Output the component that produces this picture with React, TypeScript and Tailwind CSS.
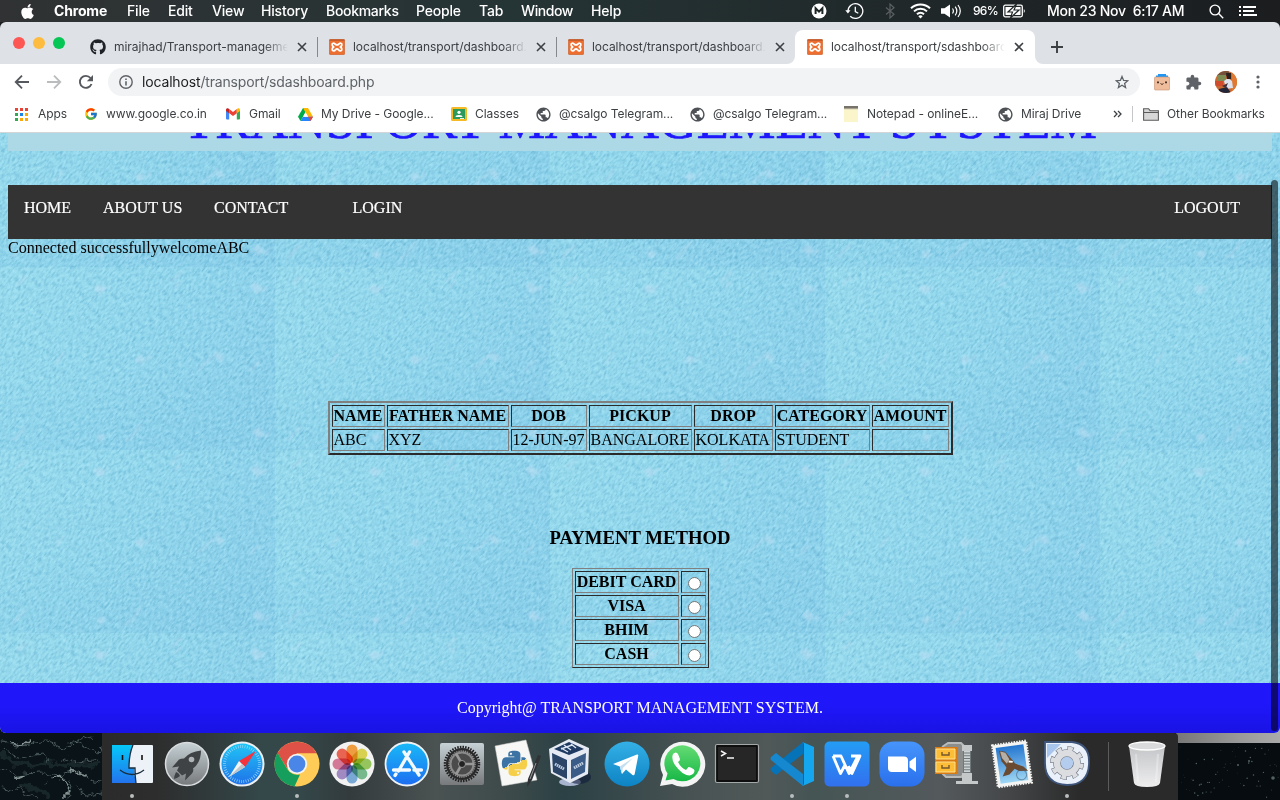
import React from 'react';
import { FaApple, FaGithub, FaPython } from 'react-icons/fa';
import { MdExtension, MdPublic } from 'react-icons/md';
import { FcGoogle } from 'react-icons/fc';

/* ---------- macOS menu bar ---------- */

const menus = [
  { label: 'Chrome', cls: 'w-[73px] font-bold' },
  { label: 'File', cls: 'w-[41px] font-medium' },
  { label: 'Edit', cls: 'w-[44px] font-medium' },
  { label: 'View', cls: 'w-[49px] font-medium' },
  { label: 'History', cls: 'w-[65px] font-medium' },
  { label: 'Bookmarks', cls: 'w-[90px] font-medium tracking-[-0.3px]' },
  { label: 'People', cls: 'w-[63px] font-medium' },
  { label: 'Tab', cls: 'w-[42px] font-medium' },
  { label: 'Window', cls: 'w-[70px] font-medium tracking-[-0.4px]' },
  { label: 'Help', cls: 'w-[60px] font-medium' },
];

function MenuBar() {
  return (
    <header className="flex h-[22px] shrink-0 items-center bg-linear-to-r from-[#303233] via-[#253435] via-40% to-[#1b1d1f] text-[14px] leading-[22px] tracking-[-0.18px] text-white">
      <FaApple className="ml-[19px] mr-[18px] size-[17px]" />
      {menus.map((m) => (
        <span key={m.label} className={`shrink-0 whitespace-nowrap ${m.cls}`}>{m.label}</span>
      ))}
      <svg className="ml-auto mr-[18px] shrink-0" width="16" height="16" viewBox="0 0 16 16">
        <circle cx="8" cy="8" r="7.5" fill="#fff" />
        <path d="M4.6 11V5.2L8 8.6l3.4-3.4V11" fill="none" stroke="#1c2425" strokeWidth="2" />
      </svg>
      <svg className="mr-[21px] shrink-0" width="19" height="18" viewBox="0 0 19 18" fill="none" stroke="#fff" strokeWidth="1.3">
        <path d="M3 9a7.4 7.4 0 1 1 2.2 5.3" />
        <path d="M10.3 4.8v4.8l3 1.6" />
        <path d="M.3 8.3h5.2L2.9 11.6z" fill="#fff" stroke="none" />
      </svg>
      <svg className="mr-[15px] shrink-0" width="10" height="16" viewBox="0 0 10 16" fill="none" stroke="#5b6061" strokeWidth="1.2">
        <path d="M1 4.5 9 11.300 5 15V1l4 3.700L1 11.500" />
      </svg>
      <svg className="mr-[10px] shrink-0" width="21" height="16" viewBox="0 0 21 16" fill="none" stroke="#fff" strokeWidth="2">
        <path d="M1 5.300a13.500 13.500 0 0 1 19 0M4 8.400a9.300 9.300 0 0 1 13 0M7 11.300a5 5 0 0 1 7 0" />
        <path d="m10.500 15.500-2.200-2.300a3.200 3.200 0 0 1 4.400 0z" fill="#fff" stroke="none" />
      </svg>
      <svg className="mr-[11px] shrink-0" width="21" height="16" viewBox="0 0 21 16" fill="none" stroke="#fff" strokeWidth="1.200">
        <path d="M0 5.300h3.500L9 1.500v13L3.500 10.700H0z" fill="#fff" stroke="none" />
        <path d="M11.500 5.500q1.800 2.500 0 5M14.200 3.700q3.200 4.300 0 8.600M17 2q4.600 6 0 12" />
      </svg>
      <span className="w-[30px] shrink-0 text-[12px] font-medium tracking-[-0.7px]">96%</span>
      <svg className="shrink-0" width="23" height="14" viewBox="0 0 23 14">
        <rect x=".7" y="1.200" width="18.600" height="11.600" rx="1.500" fill="none" stroke="#fff" strokeWidth="1.300" />
        <rect x="2.500" y="3" width="15" height="8" fill="#fff" />
        <path d="M20.800 5q2 2 0 4z" fill="#fff" />
        <path d="M13.500 0 5 8h4.500L7.500 14 16 6h-5z" fill="#fff" stroke="#1e2526" strokeWidth="1.200" />
      </svg>
      <span className="ml-[21px] w-[162px] shrink-0 whitespace-pre font-medium tracking-[-0.26px]">Mon 23 Nov  6:17 AM</span>
      <svg className="mr-[15px] shrink-0" width="15" height="15" viewBox="0 0 15 15" fill="none" stroke="#fff" strokeWidth="1.400">
        <circle cx="6" cy="6" r="4.900" />
        <path d="m9.600 9.600 4.600 4.600" />
      </svg>
      <svg className="mr-[23px] shrink-0" width="18" height="12" viewBox="0 0 18 12" fill="#fff">
        <path d="M0 1h2v2H0zM4 1h13v2H4zM0 5h2v2H0zM4 5h11v2H4zM0 9h2v2H0zM4 9h14v2H4z" />
      </svg>
    </header>
  );
}

/* ---------- Chrome tabs ---------- */

function Xampp() {
  return (
    <svg width="16" height="16" viewBox="0 0 16 16" className="shrink-0">
      <rect x=".3" y=".3" width="15.400" height="15.400" rx="1.500" fill="#ed6e2e" stroke="#c4602f" strokeWidth=".6" />
      <path d="M.5.500h15v1.200H.5z" fill="#b5562c" />
      <path d="M6.300 5.300C5 3.300 2.700 4.300 3.200 6q.2 1 1.300 2-1.300 1-1.300 2.200c0 2 2.300 2.300 3.100.6q1.700-1.500 3.400 0c.8 1.700 3.100 1.400 3.100-.6q0-1.200-1.300-2.200 1.100-1 1.300-2c.5-1.700-1.800-2.700-3.100-.7q-1.700 1.300-3.400 0z" fill="none" stroke="#fff" strokeWidth="1.800" />
    </svg>
  );
}

function Cross() {
  return (
    <svg width="10" height="10" viewBox="0 0 10 10" className="shrink-0" stroke="#3c4043" strokeWidth="1.600">
      <path d="m1 1 8 8M9 1 1 9" />
    </svg>
  );
}

const tabs = [
  { title: 'mirajhad/Transport-manageme', github: true, active: false, divider: true, fade: 'from-transparent to-[#dee1e6]', track: 'tracking-[-0.03px]' },
  { title: 'localhost/transport/dashboard.', github: false, active: false, divider: true, fade: 'from-transparent to-[#dee1e6]', track: 'tracking-[-0.06px]' },
  { title: 'localhost/transport/dashboard.', github: false, active: false, divider: false, fade: 'from-transparent to-[#dee1e6]', track: 'tracking-[-0.06px]' },
  { title: 'localhost/transport/sdashboard', github: false, active: true, divider: false, fade: 'from-transparent to-white', track: 'tracking-[-0.08px]' },
];

function TabStrip() {
  return (
    <div className="flex h-[42px] shrink-0 items-end rounded-t-[6px] bg-[#dee1e6]">
      <div className="flex h-full w-[78px] shrink-0 gap-2 pl-[13px] pt-[15px]">
        <i className="size-[12px] rounded-full bg-[#fc5753]" />
        <i className="size-[12px] rounded-full bg-[#fdbc40]" />
        <i className="size-[12px] rounded-full bg-[#06c655]" />
      </div>
      {tabs.map((t, i) => (
        <div key={i} className={`relative flex h-[34px] shrink-0 items-center pl-[12px] ${t.active ? 'w-[240px] rounded-t-[8px] bg-white' : 'w-[239px]'}`}>
          {t.github ? <FaGithub className="size-[16px] shrink-0 text-[#1f2328]" /> : <Xampp />}
          <div className={`relative ml-[8px] w-[174px] overflow-hidden whitespace-nowrap text-[12px] leading-[18px] text-[#3c4043] ${t.track}`}>
            {t.title}
            <span className={`absolute inset-y-0 right-0 w-[24px] bg-linear-to-r ${t.fade}`} />
          </div>
          <div className="ml-[9px] flex"><Cross /></div>
          {t.divider && <i className="-mr-px ml-auto h-[20px] w-px bg-[#85898e]" />}
          {t.active && (
            <>
              <svg className="absolute bottom-0 -left-[8px]" width="8" height="8"><path d="M8 0v8H0a8 8 0 0 0 8-8" fill="#fff" /></svg>
              <svg className="absolute bottom-0 -right-[8px]" width="8" height="8"><path d="M0 0v8h8a8 8 0 0 1-8-8" fill="#fff" /></svg>
            </>
          )}
        </div>
      ))}
      <svg className="mb-[11px] ml-[16px]" width="12" height="12" viewBox="0 0 12 12" stroke="#3c4043" strokeWidth="1.900"><path d="M6 0v12M0 6h12" /></svg>
    </div>
  );
}

function Toolbar() {
  return (
    <div className="flex h-[36px] shrink-0 items-center bg-white">
      <svg className="ml-[14px]" width="16" height="16" viewBox="0 0 16 16" fill="none" stroke="#55595e" strokeWidth="1.800"><path d="M15 8H2M8 1.700 1.700 8 8 14.300" /></svg>
      <svg className="ml-[16px]" width="16" height="16" viewBox="0 0 16 16" fill="none" stroke="#babcbe" strokeWidth="1.800"><path d="M1 8h13M8 1.700 14.300 8 8 14.300" /></svg>
      <svg className="ml-[16px]" width="16" height="16" viewBox="0 0 16 16" fill="none" stroke="#55595e" strokeWidth="1.900"><path d="M13.500 10A6 6 0 1 1 12.500 4" /><path d="M15 1v6.200H8.800z" fill="#55595e" stroke="none" /></svg>
      <div className="ml-[14px] flex h-[28px] w-[1032px] shrink-0 items-center rounded-full bg-[#f1f3f4]">
        <svg className="ml-[11px]" width="14" height="14" viewBox="0 0 14 14" fill="none" stroke="#5f6368" strokeWidth="1.400"><circle cx="7" cy="7" r="6.200" /><path d="M7 6.200v4.300M7 3.500v1.500" strokeWidth="1.600" /></svg>
        <span className="ml-[9px] text-[14px] leading-[20px] tracking-[-0.16px] text-[#5f6368]"><span className="text-[#202124]">localhost</span>/transport/sdashboard.php</span>
        <svg className="ml-auto mr-[11px]" width="14" height="14" viewBox="0 0 14 14" fill="none" stroke="#5f6368" strokeWidth="1.300"><path d="m7 1.500 1.600 3.900 4.200.300-3.200 2.700 1 4.100L7 10.300l-3.600 2.200 1-4.100L1.200 5.700l4.200-.300z" /></svg>
      </div>
      <svg className="ml-[14px]" width="16" height="17" viewBox="0 0 16 17">
        <path d="M4 0h8v3H4z" fill="#2196f3" /><path d="M2 1.500h12V4H2z" fill="#2196f3" />
        <rect x=".5" y="3" width="15" height="13" rx="1" fill="#efbd9c" stroke="#c7926f" strokeWidth=".6" />
        <path d="M3 7.500h2v1.800H3zM11 7.500h2v1.800h-2z" fill="#4a3428" /><path d="M6.500 9.500q1.500 2 3 0" fill="none" stroke="#4a3428" />
      </svg>
      <MdExtension className="ml-[15px] size-[17px] text-[#5f6368]" />
      <svg className="ml-[13px]" width="22" height="22" viewBox="0 0 22 22">
        <clipPath id="face"><circle cx="11" cy="11" r="11" /></clipPath>
        <g clipPath="url(#face)">
          <path d="M0 0h22v22H0z" fill="#c96a34" /><path d="M0 0h14v5H0z" fill="#76513a" /><path d="M2 4h9v6H2z" fill="#7d8b55" />
          <path d="M0 10h8v5H0z" fill="#d04c2c" /><path d="M17 0h5v22h-5z" fill="#e07a32" />
          <path d="m9 10 4-3 4 3 1 7-7 1z" fill="#dde2ef" /><path d="M11 2h5v6h-4z" fill="#2d211e" /><path d="M4 18l8-2 4 6H3z" fill="#232638" /><path d="m7 15 6-3-2 5z" fill="#463039" />
        </g>
      </svg>
      <svg className="ml-[19px]" width="4" height="14" fill="#5f6368"><circle cx="2" cy="2" r="1.600" /><circle cx="2" cy="7" r="1.600" /><circle cx="2" cy="12" r="1.600" /></svg>
    </div>
  );
}

/* ---------- Bookmarks ---------- */

const appColors = ['#ea4335', '#ea4335', '#ea4335', '#34a853', '#1a84e8', '#fbaa05', '#34a853', '#fbaa05', '#fbaa05'];

function Globe() {
  return (
    <span className="relative -mx-px flex size-[17px] items-center justify-center">
      <i className="absolute size-[13px] rounded-full bg-white" />
      <MdPublic className="relative size-[17px] text-[#4d5156]" />
    </span>
  );
}

const bookmarks = [
  {
    label: 'Apps', cls: 'w-[69px] gap-[10px]',
    icon: <svg width="13" height="13" viewBox="0 0 13 13">{appColors.map((c, i) => <rect key={i} x={(i % 3) * 5} y={Math.floor(i / 3) * 5} width="3" height="3" fill={c} />)}</svg>,
  },
  { label: 'www.google.co.in', cls: 'w-[142px] gap-[8px]', icon: <FcGoogle className="size-[14px]" /> },
  {
    label: 'Gmail', cls: 'w-[72px] gap-[9px]',
    icon: (
      <svg width="14" height="12" viewBox="0 0 14 12">
        <path d="M0 2v8.500q0 1 1 1h2.200V4.500z" fill="#4285f4" /><path d="M14 2v8.500q0 1-1 1h-2.200V4.500z" fill="#34a853" />
        <path d="M3.200 1v4.200L7 8l3.800-2.800V1L7 3.900z" fill="#ea4335" /><path d="M0 2C0 .2 1.800-.2 3.200 1v4.200L0 2.900z" fill="#c5221f" /><path d="M14 2c0-1.800-1.800-2.200-3.200-1v4.200L14 2.900z" fill="#fbbc04" />
      </svg>
    ),
  },
  {
    label: 'My Drive - Google...', cls: 'w-[153px] gap-[8px]',
    icon: (
      <svg width="15" height="13" viewBox="0 0 15 13">
        <path d="M5 0h5L5 8.700 2.500 13 0 8.700z" fill="#00ac47" /><path d="M5 0h5l5 8.700h-5z" fill="#ffba00" /><path d="M5 8.700h10L12.500 13h-10z" fill="#2684fc" /><path d="M10 8.700h5L12.500 13z" fill="#ea4335" /><path d="M7.500 4.300 5 8.700h5z" fill="#fff" />
      </svg>
    ),
  },
  {
    label: 'Classes', cls: 'w-[85px] gap-[8px]',
    icon: (
      <svg width="16" height="14" viewBox="0 0 16 14">
        <rect width="16" height="14" rx="1.500" fill="#f5ba26" /><path d="M2 2h12v10H2z" fill="#2c9a5c" /><circle cx="8" cy="5.300" r="1.600" fill="#fff" /><path d="M4.500 10q0-2 3.500-2t3.500 2z" fill="#fff" /><path d="M9 11h4v1H9z" fill="#e8f5e9" />
      </svg>
    ),
  },
  { label: '@csalgo Telegram...', cls: 'w-[154px] gap-[8px]', icon: <Globe /> },
  { label: '@csalgo Telegram...', cls: 'w-[154px] gap-[8px]', icon: <Globe /> },
  {
    label: 'Notepad - onlineE...', cls: 'w-[154px] gap-[9px]',
    icon: <svg width="14" height="16" viewBox="0 0 14 16"><path d="M0 1h14v15H0z" fill="#fbf5cb" /><path d="M0 0h14v3H0z" fill="#77736b" /><path d="M0 3h14" stroke="#d8d3b4" /></svg>,
  },
  { label: 'Miraj Drive', cls: 'w-[115px] gap-[8px]', icon: <Globe /> },
];

function Bookmarks() {
  return (
    <div className="flex h-[33px] shrink-0 items-center border-b border-[#d3d5d6] bg-white pb-[4px] pl-[15px] text-[12px] tracking-[-0.07px] text-[#3c4043]">
      {bookmarks.map((b, i) => (
        <div key={i} className={`flex shrink-0 items-center whitespace-nowrap ${b.cls}`}>
          <span className="shrink-0">{b.icon}</span>
          {b.label}
        </div>
      ))}
      <svg width="9" height="8" viewBox="0 0 9 8" fill="none" stroke="#3c4043" strokeWidth="1.300"><path d="m1 1 3 3-3 3M5 1l3 3-3 3" /></svg>
      <i className="ml-[10px] h-[16px] w-px bg-[#c4c6c9]" />
      <svg className="ml-[10px]" width="16" height="13" viewBox="0 0 16 13"><path d="M.6 12.300V.7h5l1.500 2h8.300v9.600z" fill="#d7d7d7" stroke="#5b5b5b" strokeWidth="1.100" /><path d="M.6 4.500h14.800" stroke="#5b5b5b" /></svg>
      <span className="ml-[8px] whitespace-nowrap">Other Bookmarks</span>
    </div>
  );
}

/* ---------- Web page ---------- */

function Texture() {
  return (
    <svg className="absolute inset-0" width="1280" height="600">
      <defs>
        <linearGradient id="tone" x1="0" y1="0" x2="1" y2=".5">
          <stop offset="0" stopColor="#99dcee" /><stop offset=".5" stopColor="#93d8ed" /><stop offset="1" stopColor="#8cd1eb" />
        </linearGradient>
        <linearGradient id="base" x2="0" y2="1">
          <stop offset=".6" stopColor="#7fc8e6" stopOpacity="0" /><stop offset="1" stopColor="#7fc8e6" stopOpacity=".25" />
        </linearGradient>
        <pattern id="tile" x="0" y="134" width="275" height="183" patternUnits="userSpaceOnUse">
          <rect width="275" height="183" fill="url(#tone)" />
          <rect width="275" height="183" fill="url(#base)" />
        </pattern>
        <pattern id="marks" x="0" y="134" width="275" height="183" patternUnits="userSpaceOnUse">
          <g fill="#c0e2f6" opacity=".5">
            <path d="m93 21 6-4 6 4-5 7zM250 19l6-4 7 6-6 7zM134 93l6-5 5 3-4 7zM215 90l5-4 5 5-5 4zM252 165l6-5 7 7-6 5zM96 170l6-4 4 4-5 5z" />
          </g>
          <g stroke="#bcdcf3" strokeWidth="2.500" opacity=".4" strokeLinecap="round">
            <path d="m103 24 5-5M172 14l9-9M175 20l5-5M262 24l4-4M18 17l8-7M56 96l7-9M199 102l19-17M251 103l8-8M146 94l4-5M130 172l11-14M126 174l4-3M265 170l4-4M13 173l12-12" />
          </g>
        </pattern>
        <filter id="soft"><feGaussianBlur stdDeviation="1.100" /></filter>
        <filter id="grain" x="0" y="0" width="100%" height="100%" colorInterpolationFilters="sRGB">
          <feTurbulence type="fractalNoise" baseFrequency=".2 .5" numOctaves="3" seed="8" />
          <feColorMatrix values="0 0 0 0 .25  0 0 0 0 .58  0 0 0 0 .74  1.500 0 0 0 -.6" />
        </filter>
        <filter id="shine" x="0" y="0" width="100%" height="100%" colorInterpolationFilters="sRGB">
          <feTurbulence type="fractalNoise" baseFrequency=".22 .52" numOctaves="3" seed="21" />
          <feColorMatrix values="0 0 0 0 .75  0 0 0 0 .95  0 0 0 0 1  1.500 0 0 0 -.56" />
        </filter>
      </defs>
      <rect width="1280" height="600" fill="url(#tile)" />
      <g transform="rotate(-50 640 300)">
        <rect x="-100" y="-400" width="1480" height="1400" filter="url(#grain)" opacity=".65" />
        <rect x="-100" y="-400" width="1480" height="1400" filter="url(#shine)" opacity=".65" />
      </g>
      <rect width="1280" height="600" fill="url(#marks)" filter="url(#soft)" />
    </svg>
  );
}

const columns = [
  { head: 'NAME', value: 'ABC', cls: 'w-[53px]' },
  { head: 'FATHER NAME', value: 'XYZ', cls: 'w-[122px]' },
  { head: 'DOB', value: '12-JUN-97', cls: 'w-[76px]' },
  { head: 'PICKUP', value: 'BANGALORE', cls: 'w-[103px]' },
  { head: 'DROP', value: 'KOLKATA', cls: 'w-[79px]' },
  { head: 'CATEGORY', value: 'STUDENT', cls: 'w-[95px]' },
  { head: 'AMOUNT', value: '', cls: 'w-[77px]' },
];

const cell = 'h-[22px] border border-t-[#2b2b2b] border-l-[#2b2b2b] border-r-[#808080] border-b-[#808080] px-px py-0 whitespace-nowrap leading-[18px]';

function Page() {
  return (
    <main className="relative h-[600px] shrink-0 overflow-hidden rounded-b-[6px] font-['Liberation_Serif',serif] text-[16px] leading-[18px] text-black">
      <Texture />
      <div className="relative flex h-full flex-col">
        <div className="mx-[8px] flex h-[18px] shrink-0 items-end justify-center overflow-hidden bg-[#add8e6]">
          <h1 className="mb-[3px] whitespace-nowrap text-[52.500px] leading-[56px] text-[#1f17fb] [-webkit-text-stroke:0.7px_#1f17fb]">TRANSPORT MANAGEMENT SYSTEM</h1>
        </div>
        <nav className="mx-[8px] mt-[34px] flex h-[54px] shrink-0 bg-[#333] px-[16px] pt-[14px] text-white [-webkit-text-stroke:0.2px_#fff]">
          <span className="w-[79px]">HOME</span>
          <span className="w-[111px]">ABOUT US</span>
          <span className="w-[138.500px]">CONTACT</span>
          <span>LOGIN</span>
          <span className="ml-auto mr-[16px]">LOGOUT</span>
        </nav>
        <p className="ml-[8px]">Connected successfullywelcomeABC</p>
        <table className="mx-auto mt-[144px] w-[625px] table-fixed border-separate border-spacing-[2px] border-2 border-t-[#808080] border-l-[#808080] border-r-[#2b2b2b] border-b-[#2b2b2b]">
          <tbody>
            <tr>{columns.map((c) => <th key={c.head} className={`${cell} ${c.cls}`}>{c.head}</th>)}</tr>
            <tr>{columns.map((c) => <td key={c.head} className={cell}>{c.value}</td>)}</tr>
          </tbody>
        </table>
        <h3 className="mt-[72px] text-center text-[18.720px] font-bold leading-[22px]">PAYMENT METHOD</h3>
        <table className="mx-auto mt-[19px] w-[137px] table-fixed border-separate border-spacing-[2px] border border-t-[#808080] border-l-[#808080] border-r-[#2b2b2b] border-b-[#2b2b2b]">
          <tbody>
            {['DEBIT CARD', 'VISA', 'BHIM', 'CASH'].map((m) => (
              <tr key={m}>
                <th className={`${cell} w-[104px]`}>{m}</th>
                <td className={cell}>
                  <label className="flex justify-center pl-[3px] pt-[3px]">
                    <input type="radio" name="method" className="size-[13px] appearance-none rounded-full border border-[#777] bg-white" />
                  </label>
                </td>
              </tr>
            ))}
          </tbody>
        </table>
        <footer className="mt-auto flex h-[50px] shrink-0 items-center justify-center bg-linear-to-b from-[#1f17fa] from-40% to-[#1a13e4] text-white">
          Copyright@ TRANSPORT MANAGEMENT SYSTEM.
        </footer>
      </div>
      <i className="absolute right-[2px] top-[47px] h-[551px] w-[7px] rounded-full bg-black/55" />
    </main>
  );
}

/* ---------- Dock ---------- */

const Art = ({ children }: { children: React.ReactNode }) => (
  <svg width="46" height="46" viewBox="0 0 46 46" className="overflow-visible">{children}</svg>
);

const finder = (
  <Art>
    <path d="M3 4h40v38H3z" fill="url(#d-finder)" /><path d="M24 4h19q1 0 1 1v36q0 1-1 1H27q-2-9-1.500-15H20Q20 13 24 4" fill="#edf2f8" />
    <path d="M13.500 14v5M33 14v5" stroke="#111" strokeWidth="1.600" /><path d="M11 29q12 9 24 0M24 4q-4 9-4 23h6q0 8 1 15" fill="none" stroke="#1b2c3c" strokeWidth="1.300" />
  </Art>
);
const launchpad = (
  <Art>
    <circle cx="23" cy="23" r="21.500" fill="url(#d-grey)" stroke="#d8dcde" strokeWidth="1.500" />
    <path d="M37 9.500q-11 1-17 8-3 0-5 1l-7 8 7-1-2 4 5 5 4-2-1 7 7-7q2-3 1-5 8-6 8-18" fill="#404345" /><circle cx="27.500" cy="18.500" r="2.800" fill="#aeb3b5" /><path d="M12 31q-2 4-2 7 4-1 6-3l-1-2-1-1z" fill="#404345" />
  </Art>
);
const safari = (
  <Art>
    <circle cx="23" cy="23" r="21.500" fill="url(#d-safari)" stroke="#ebeff2" strokeWidth="2" />
    <circle cx="23" cy="23" r="17.500" fill="none" stroke="#a5ddfa" strokeWidth="3" strokeDasharray=".6 1.690" />
    <path d="M37 10 20 20l6 6z" fill="#f4333c" /><path d="M10 36l10-16 6 6z" fill="#f4f4f4" /><path d="m10 36 13-13 3 3z" fill="#bfc6cb" />
  </Art>
);
const chrome = (
  <Art>
    <circle cx="23" cy="23" r="22.500" fill="#ffcd57" />
    <path d="M3.500 12A22.500 22.500 0 0 1 42.700 12.200H23L13.500 28z" fill="#dd5147" />
    <path d="M3.500 11.800 13.600 28.500A11 11 0 0 0 26 33.400L20.500 45.400A22.500 22.500 0 0 1 3.500 11.800" fill="#169f5c" />
    <circle cx="23" cy="23" r="10.200" fill="#f4f4f4" /><circle cx="23" cy="23" r="8.400" fill="#4a85e8" />
  </Art>
);
const petals = ['#fb9a28', '#dfd839', '#8fc94b', '#69b984', '#6ca6dc', '#9d7fc6', '#dc6b92', '#f4533e'];
const photos = (
  <Art>
    <circle cx="23" cy="23" r="22.500" fill="#f2f2f2" />
    {petals.map((c, i) => <rect key={c} x="17.500" y="3.500" width="11" height="18.500" rx="5.500" fill={c} opacity=".87" transform={`rotate(${i * 45} 23 23)`} className="mix-blend-multiply" />)}
    <circle cx="23" cy="23" r="1.500" fill="#fff" />
  </Art>
);
const appStore = (
  <Art>
    <circle cx="23" cy="23" r="21.500" fill="url(#d-store)" stroke="#eef2f5" strokeWidth="1.800" />
    <g stroke="#f2f9ff" strokeWidth="3.300" strokeLinecap="round"><path d="M25.500 11 14.500 30M20 11l15 23M9.500 29h16M30 29h7.500M12 33l-1 1.500" /></g>
  </Art>
);
const settings = (
  <Art>
    <rect x="1" y="2" width="44" height="42" rx="2" fill="url(#d-grey)" />
    <circle cx="23" cy="23" r="17" fill="none" stroke="#222" strokeWidth="2.500" strokeDasharray="1.500 1.170" /><circle cx="23" cy="23" r="16" fill="#29292a" />
    <circle cx="23" cy="23" r="13" fill="#3b3b3b" stroke="#8f8f8f" strokeWidth="1.500" strokeDasharray="1.300 .9" />
    <circle cx="23" cy="23" r="11.500" fill="#4b4b4b" stroke="#8b8b8b" strokeWidth="2" /><path d="M23 23h12M23 23 17 12.500M23 23l-6 10.500" stroke="#999" strokeWidth="2.600" /><circle cx="23" cy="23" r="3.500" fill="#222" stroke="#999" />
  </Art>
);
const python = (
  <Art>
    <path d="M1 5 32-1l11 40-35 6z" fill="#f7f7f5" stroke="#c9c9c9" strokeWidth=".5" />
    <defs><linearGradient id="d-py" x1=".3" y1="0" x2=".7" y2="1"><stop offset=".5" stopColor="#3b73a4" /><stop offset=".5" stopColor="#f5cf4a" /></linearGradient></defs>
    <FaPython size={29} x="6" y="8" fill="url(#d-py)" />
    <path d="m44 14 3 1-9 24-5 7 1-8z" fill="#303236" /><path d="m42 22-6 16" stroke="#96999d" strokeWidth="1" />
  </Art>
);
const virtualBox = (
  <Art>
    <ellipse cx="21" cy="41" rx="11" ry="4" fill="#a8b4cf" /><ellipse cx="30" cy="36" rx="12" ry="7" fill="#101b39" opacity=".6" />
    <path d="m20-2 20 9-1 26-18 9L2 32 0 8z" fill="#e5eaf3" />
    <path d="m20 1 15 7-15 6L5 8z" fill="#1f3b62" /><path d="m3 12 15 7v19L4 31z" fill="#2a4568" /><path d="m22 19 15-7-1 19-14 7z" fill="#3b5c87" />
    <path d="m12 7 7 4m-4-7 7 5m0-6 5 4m-15 1 11-4" stroke="#dbe6f3" strokeWidth="1.400" />
    <path d="m6 23 9 5M25 27l9-5" stroke="#c5d2e4" strokeWidth="3" strokeDasharray="1.500 .7" />
  </Art>
);
const telegram = (
  <Art>
    <circle cx="23" cy="23" r="22.500" fill="url(#d-tg)" />
    <path d="M9 23 33 13.500q1.500-.4 1.200 1.500l-3.500 18q-.5 2-2.200 1L22 28.500l-4 4.500-2.200-7.500z" fill="#fff" /><path d="m18 33 .8-6L29 17l-13.200 8.500z" fill="#c5dff0" />
  </Art>
);
const whatsapp = (
  <Art>
    <path d="M1 45 4 34A22.500 22.500 0 1 1 13 43z" fill="#f4f4f4" /><path d="m6.500 39.500 2-7a18 18 0 1 1 6 5.500z" fill="url(#d-wa)" />
    <path d="M14 13q3-3 5 0l2 5q0 2-2 3 3 6 8 8l2.500-3q5 1 6 3.500 0 4-5 5Q23 34 16 24q-4-6-2-11" fill="#fff" />
  </Art>
);
const terminal = (
  <Art>
    <rect x="1.500" y="3.500" width="43" height="38" rx="1.500" fill="#0e0e0e" stroke="#a4a8a8" strokeWidth="1.200" /><rect x="4" y="6" width="38" height="33" fill="#262626" />
    <path d="m7 10 4.500 2.500L7 15M13 17h7" fill="none" stroke="#f4f4f4" strokeWidth="1.500" />
  </Art>
);
const vscode = (
  <Art>
    <path d="M34 1v12L7 34l-5-4q-1-1.500 0-3z" fill="#0672b8" /><path d="M34 45V33L7 12l-5 4q-1 1.500 0 3z" fill="#1588cf" /><path d="M33 .7 45 6v34l-12 5.300q2-1 2-3V3.500q0-2-2-2.800" fill="#14a6ee" />
  </Art>
);
const wps = (
  <Art>
    <rect x=".5" y=".5" width="45" height="45" rx="5" fill="url(#d-wps)" />
    <path d="M9 15h8l8 17.500L34 15h-7M9 15l7.500 17.500L21 24M27 15h9l-8 17.500L24.500 25" fill="none" stroke="#fff" strokeWidth="2.800" strokeLinejoin="round" />
  </Art>
);
const zoomApp = (
  <Art>
    <rect x=".5" y=".5" width="45" height="45" rx="14" fill="url(#d-zoom)" />
    <path d="M9 15.500h16q4 0 4 4V31H13q-4 0-4-4zM30.500 20.500l6.500-4.700V31l-6.500-4.800z" fill="#fff" />
  </Art>
);
const archive = (
  <Art>
    <path d="m8 6 6-4h13l5 5v25l-5 4H12l-4-4" fill="#8c8e8e" stroke="#b9bbbb" strokeWidth="2" />
    <path d="M1 6h23v27H1z" fill="#d87b12" /><path d="M2 8h19v10H2zM2 21h19v10H2z" fill="#fdbd37" stroke="#ffe08c" strokeWidth="1" /><path d="M8 11v3h7v-3M8 24v3h7v-3" fill="none" stroke="#74572c" strokeWidth="1.400" />
    <path d="M33 4v37" stroke="#70787b" strokeWidth="8" /><path d="M33 4v37" stroke="#ccd3d4" strokeWidth="6" strokeDasharray="1.800 1" /><path d="M28 4h10v6H28zM28 32h10v8H28zM22 40h22v3H22z" fill="#c4c8c9" />
  </Art>
);
const mail = (
  <Art>
    <g transform="rotate(-8 23 23)">
      <rect x="6" y="2" width="34" height="42" fill="#f4f4f2" stroke="#f4f4f2" strokeWidth="2.500" strokeDasharray="1.500 1.200" /><rect x="9" y="5" width="28" height="36" fill="url(#d-mail)" />
      <path d="m12 8 6 2 6 9 2 4 8 4 4 5-9-1-4-3-6 5-7 1 5-8q-1-3-4-7z" fill="#6a4a30" /><path d="m13 9 5 2 3 7-3 4-4-6z" fill="#b4b0a8" /><path d="m20 20 4 1" stroke="#fff" strokeWidth="2" />
      <circle cx="31" cy="35" r="5" fill="none" stroke="#456078" opacity=".6" />
    </g>
  </Art>
);
const automator = (
  <Art>
    <path d="M1 1h27q17 2 17 19v3q-1 21-22 21Q1 43 1 22z" fill="#eaf1fa" stroke="#3e557c" strokeWidth="1.800" /><path d="M3 3h14L3 17z" fill="#a8c6ed" />
    <circle cx="23" cy="22" r="14.500" fill="none" stroke="#717783" strokeWidth="5" strokeDasharray="6 5.390" />
    <circle cx="23" cy="22" r="10" fill="#b4cdee" stroke="#717783" strokeWidth="7.600" />
    <circle cx="23" cy="22" r="14.500" fill="none" stroke="#dcdde0" strokeWidth="4" strokeDasharray="4.800 6.590" strokeDashoffset="-.6" />
    <circle cx="23" cy="22" r="10" fill="none" stroke="#dcdde0" strokeWidth="6.400" />
  </Art>
);
const trash = (
  <Art>
    <path d="M5 5h36l-5 37q-1 4-13 4t-13-4z" fill="url(#d-bin)" /><ellipse cx="23" cy="5" rx="18" ry="4" fill="#d9dadb" stroke="#fff" strokeWidth="1.300" />
    <path d="m12 13 2 28M34 13l-2 28" stroke="#fff" strokeWidth="2" opacity=".3" />
  </Art>
);

const dock = [
  { art: finder, on: true }, { art: launchpad, on: false }, { art: safari, on: false }, { art: chrome, on: true }, { art: photos, on: false },
  { art: appStore, on: false }, { art: settings, on: false }, { art: python, on: false }, { art: virtualBox, on: false }, { art: telegram, on: false },
  { art: whatsapp, on: false }, { art: terminal, on: false }, { art: vscode, on: true }, { art: wps, on: true }, { art: zoomApp, on: false },
  { art: archive, on: false }, { art: mail, on: false }, { art: automator, on: true },
];

const ramps: [string, string, string][] = [
  ['d-finder', '#05c8f8', '#2373ee'], ['d-grey', '#c6d2d6', '#77797b'], ['d-safari', '#20c7f5', '#1f70e8'], ['d-store', '#18baf8', '#1d6df0'],
  ['d-tg', '#35b0e6', '#0d83c4'], ['d-wa', '#64db73', '#17b846'], ['d-wps', '#249cf5', '#3270ee'], ['d-zoom', '#4694fb', '#2a70ec'],
  ['d-mail', '#2476cf', '#9ed6f4'], ['d-bin', '#c4c5c8', '#eeeeef'],
];

function Desktop() {
  return (
    <div className="relative -mt-[6px] flex h-[73px] shrink-0 bg-[#060c10]">
      <svg className="absolute inset-0" width="1280" height="73">
        <defs>
          {ramps.map(([id, a, b]) => <linearGradient key={id} id={id} x2="0" y2="1"><stop stopColor={a} /><stop offset="1" stopColor={b} /></linearGradient>)}
          <linearGradient id="edge"><stop stopColor="#777" /><stop offset=".6" stopColor="#999" /><stop offset="1" stopColor="#aaa" /></linearGradient>
          <filter id="foam" x="-10%" y="-10%" width="120%" height="120%">
            <feTurbulence type="fractalNoise" baseFrequency=".09" numOctaves="3" seed="4" />
            <feDisplacementMap in="SourceGraphic" scale="14" xChannelSelector="R" yChannelSelector="G" />
            <feGaussianBlur stdDeviation=".35" />
          </filter>
        </defs>
        <rect width="104" height="73" fill="#0a1418" />
        <g filter="url(#foam)" fill="none" stroke="#8fa5a6" strokeLinecap="round">
          <path d="M0 15 22 19 44 15 62 22 90 10M4 24l20 6 16-4 12 8M70 14l24 10 10-2M0 42l16 6 24-2 16 4 14-6 30 10M48 54l14-6 10 8-4 14M76 60l12 8 14-2M2 60l20 4 14 8M60 32l16 4 20-4" strokeWidth=".8" opacity=".6" />
          <path d="M10 14l12 4 8-4M52 52l10-3 6 8-2 10M72 44l14 4M14 50l12-2" strokeWidth="1.800" stroke="#b5c4c3" opacity=".7" />
          <path d="M0 30l30 10 20-6 18 6 30-4M20 60l20 2 10 8" strokeWidth="4" stroke="#3a5255" opacity=".3" />
        </g>
        <g fill="#73868b" opacity=".7">
          {Array.from({ length: 60 }, (_, i) => <circle key={i} cx={1180 + ((i * 37.7) % 100)} cy={20 + ((i * 23.3 + i * i * 1.7) % 52)} r={0.3 + (i % 4) * 0.15} />)}
          <circle cx="1273" cy="51" r="1.800" /><circle cx="1249" cy="34" r="1" /><circle cx="1238" cy="38" r="1" />
        </g>
        <rect x="1176" width="104" height="16" fill="url(#edge)" />
      </svg>
      <div className="relative ml-[102px] mt-[6px] flex h-[67px] w-[1076px] rounded-tr-[4px] bg-[linear-gradient(90deg,#2b2b2b_0,#2d2d2d_5%,#34484a_15%,#34484a_18%,#333b3d_23%,#4a5252_31%,#3d4a4a_38%,#2b4145_43%,#4b5454_56%,#505858_62%,#455554_66%,#54595c_78%,#454749_84%,#2a2a2a_91%)] pl-[2px]">
        {dock.map((d, i) => (
          <div key={i} className="relative flex w-[55px] shrink-0 flex-col items-center pt-[8px]">
            {d.art}
            {d.on && <i className="mt-[7px] size-[4px] rounded-full bg-[#b9bdbd]" />}
          </div>
        ))}
        <i className="ml-[14px] mr-[13px] mt-[9px] h-[49px] w-px shrink-0 bg-[#5b5b5b]" />
        <div className="flex w-[50px] justify-center pt-[8px]">{trash}</div>
      </div>
    </div>
  );
}

export default function App() {
  return (
    <div className="flex h-[800px] w-[1280px] flex-col overflow-hidden bg-[#1b1d1f] font-[Inter,'Noto_Sans',sans-serif]">
      <MenuBar />
      <TabStrip />
      <Toolbar />
      <Bookmarks />
      <div className="relative z-10 flex flex-col"><Page /></div>
      <Desktop />
    </div>
  );
}
